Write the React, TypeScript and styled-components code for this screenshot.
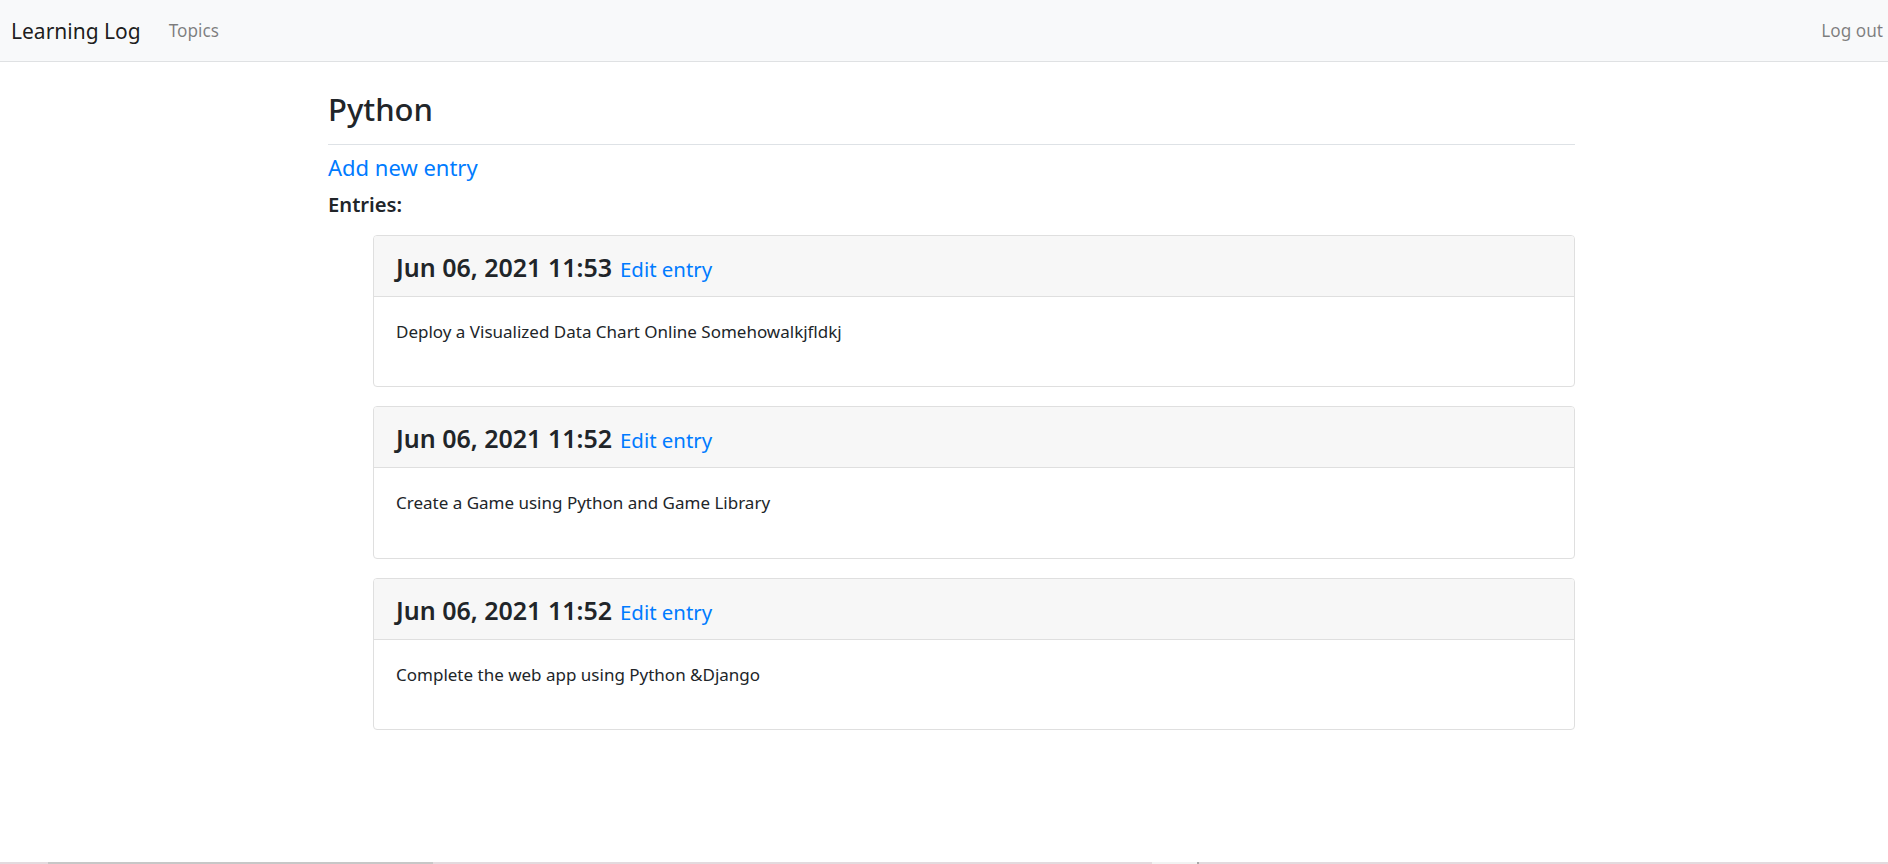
import React from 'react'
import styled, { createGlobalStyle } from 'styled-components'

const GlobalStyle = createGlobalStyle`
  html, body {
    margin: 0;
    padding: 0;
    background: #fff;
  }
  body {
    font-family: "Noto Sans", "Open Sans", Arial, sans-serif;
    color: #212529;
    font-size: 17px;
  }
  #root {
    min-height: 100vh;
  }
`

const Page = styled.div`
  min-height: 100vh;
  display: flex;
  flex-direction: column;
`

const Navbar = styled.nav`
  height: 61px;
  border-bottom: 1px solid #dfe1e3;
  background: #f8f9fa;
  display: flex;
  align-items: center;
  padding: 0 5px 0 11px;
`

const Brand = styled.a`
  font-size: 21px;
  color: rgba(0, 0, 0, 0.9);
  text-decoration: none;
  margin-right: 28px;
`

const NavLink = styled.a<{ right?: boolean }>`
  font-size: 17.2px;
  color: rgba(0, 0, 0, 0.5);
  text-decoration: none;
  margin-left: ${({ right }) => (right ? 'auto' : '0')};
`

const Main = styled.main`
  flex: 1;
  width: 1247px;
  margin-left: 328px;
`

const PageHeader = styled.div`
  margin-top: 26px;
  padding-bottom: 14px;
  border-bottom: 1px solid #dee2e6;
`

const Title = styled.h2`
  margin: 0;
  font-size: 31px;
  line-height: 42px;
  font-weight: 500;
`

const AddLink = styled.a`
  display: block;
  margin-top: 8px;
  font-size: 22px;
  line-height: 28px;
  color: #007bff;
  text-decoration: none;
`

const EntriesLabel = styled.p`
  margin: 10px 0 18px;
  font-size: 20.2px;
  line-height: 26px;
  font-weight: 600;
`

const EntryList = styled.ul`
  list-style: none;
  margin: 0 0 0 45px;
  padding: 0;
`

const Card = styled.li`
  border: 1px solid #dfdfdf;
  border-radius: 4px;
  margin-bottom: 19px;
  overflow: hidden;
`

const CardHeader = styled.div`
  background: #f7f7f7;
  border-bottom: 1px solid #dfdfdf;
  padding: 15px 22px 13px;
`

const DateHeading = styled.h4`
  margin: 0;
  font-size: 25px;
  line-height: 32px;
  font-weight: 600;
`

const EditLink = styled.a`
  font-size: 20.4px;
  line-height: 1;
  font-weight: 400;
  color: #007bff;
  text-decoration: none;
  margin-left: 8px;
`

const CardBody = styled.div`
  padding: 22px 22px 21px;
`

const EntryText = styled.p`
  margin: 0 0 20px;
  font-size: 17px;
  line-height: 26.4px;
`

const BottomStrip = styled.div`
  height: 2px;
  display: flex;
`

const StripPart = styled.div<{ w: number; c: string }>`
  width: ${({ w }) => w}px;
  background: ${({ c }) => c};
  flex: ${({ w }) => (w ? 'none' : '1')};
`

const entries = [
  { date: 'Jun 06, 2021 11:53', text: 'Deploy a Visualized Data Chart Online Somehowalkjfldkj' },
  { date: 'Jun 06, 2021 11:52', text: 'Create a Game using Python and Game Library' },
  { date: 'Jun 06, 2021 11:52', text: 'Complete the web app using Python &Django' },
]

const strip = [
  { w: 48, c: '#e3dade' },
  { w: 385, c: '#c7c7c7' },
  { w: 719, c: '#e3dade' },
  { w: 45, c: '#f2f2f2' },
  { w: 2, c: '#a9a9a9' },
  { w: 0, c: '#e3dade' },
]

export default function App() {
  return (
    <Page>
      <GlobalStyle />
      <Navbar>
        <Brand href="#">Learning Log</Brand>
        <NavLink href="#">Topics</NavLink>
        <NavLink href="#" right>
          Log out
        </NavLink>
      </Navbar>
      <Main>
        <PageHeader>
          <Title>Python</Title>
        </PageHeader>
        <AddLink href="#">Add new entry</AddLink>
        <EntriesLabel>Entries:</EntriesLabel>
        <EntryList>
          {entries.map((e, i) => (
            <Card key={i}>
              <CardHeader>
                <DateHeading>
                  {e.date}
                  <EditLink href="#">Edit entry</EditLink>
                </DateHeading>
              </CardHeader>
              <CardBody>
                <EntryText>{e.text}</EntryText>
              </CardBody>
            </Card>
          ))}
        </EntryList>
      </Main>
      <BottomStrip>
        {strip.map((s, i) => (
          <StripPart key={i} w={s.w} c={s.c} />
        ))}
      </BottomStrip>
    </Page>
  )
}
